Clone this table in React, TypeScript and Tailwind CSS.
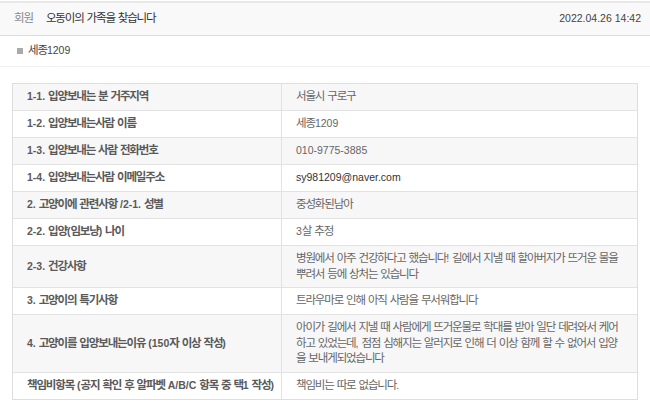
import { Fragment } from "react";

const rows: { label: string; value: string; email?: boolean }[] = [
  { label: "1-1. 입양보내는 분 거주지역", value: "서울시 구로구" },
  { label: "1-2. 입양보내는사람 이름", value: "세종1209" },
  { label: "1-3. 입양보내는 사람 전화번호", value: "010-9775-3885" },
  { label: "1-4. 입양보내는사람 이메일주소", value: "sy981209@naver.com", email: true },
  { label: "2. 고양이에 관련사항 /2-1. 성별", value: "중성화된남아" },
  { label: "2-2. 입양(임보냥) 나이", value: "3살 추정" },
  {
    label: "2-3. 건강사항",
    value:
      "병원에서 아주 건강하다고 했습니다! 길에서 지낼 때 할아버지가 뜨거운 물을 뿌려서 등에 상처는 있습니다",
  },
  { label: "3. 고양이의 특기사항", value: "트라우마로 인해 아직 사람을 무서워합니다" },
  {
    label: "4. 고양이를 입양보내는이유 (150자 이상 작성)",
    value:
      "아이가 길에서 지낼 때 사람에게 뜨거운물로 학대를 받아 일단 데려와서 케어하고 있었는데, 점점 심해지는 알러지로 인해 더 이상 함께 할 수 없어서 입양을 보내게되었습니다",
  },
  { label: "책임비항목 (공지 확인 후 알파벳 A/B/C 항목 중 택1 작성)", value: "책임비는 따로 없습니다." },
];

// hangul runs: slightly bigger glyphs, tighter tracking, closer to the original font
const K = ({ text }: { text: string }) => (
  <>
    {text.split(/([\uAC00-\uD7A3]+)/).map((part, i) =>
      /[\uAC00-\uD7A3]/.test(part) ? (
        <span key={i} className="text-[11.5px] tracking-[-1.15px]">
          {part}
        </span>
      ) : (
        <Fragment key={i}>{part}</Fragment>
      )
    )}
  </>
);

export default function App() {
  return (
    <div
      className="w-[650px] h-[412px] bg-white overflow-hidden leading-[15.5px]"
      style={{ fontFamily: '"Liberation Sans", "Noto Sans CJK KR", sans-serif' }}
    >
      <div className="mt-px h-[35px] border-t-2 border-b border-t-[#e8e8e8] border-b-[#dcdcdc] bg-[#f9f9f9] flex items-center pl-[14px] pr-[9px]">
        <span className="text-[10.5px] text-[#888]">
          <K text="회원" />
        </span>
        <span className="ml-[13px] text-[10.5px] text-[#333]">
          <K text="오동이의 가족을 찾습니다" />
        </span>
        <span className="ml-auto text-[10.5px] text-[#444]">2022.04.26 14:42</span>
      </div>
      <div className="h-[31px] border-b border-[#f0f0f0] flex items-center pl-[17px]">
        <span className="w-[6px] h-[6px] bg-[#aaa] mr-[5px]" />
        <span className="text-[10.5px] text-[#444]">
          <K text="세종1209" />
        </span>
      </div>
      <div className="mt-[16px] mx-[12px] w-[626px] border border-[#dedede]">
        {rows.map((r, i) => (
          <div
            key={i}
            className={`flex ${i > 0 ? "border-t border-[#e2e2e2]" : ""} ${
              i % 2 === 0 ? "bg-[#f7f7f7]" : "bg-white"
            }`}
          >
            <div className="w-[269px] shrink-0 border-r border-[#e2e2e2] flex items-center pl-[14px] pr-[4px] py-[5px] min-h-[26px] text-[10.5px] font-bold text-[#5a5a5a] whitespace-nowrap">
              <span>
                <K text={r.label} />
              </span>
            </div>
            <div
              className={`flex-1 flex items-center pl-[14px] pr-[12px] py-[5px] min-h-[26px] text-[10.5px] ${
                r.email ? "text-[#333]" : "text-[#666]"
              }`}
            >
              <span>
                <K text={r.value} />
              </span>
            </div>
          </div>
        ))}
      </div>
    </div>
  );
}
